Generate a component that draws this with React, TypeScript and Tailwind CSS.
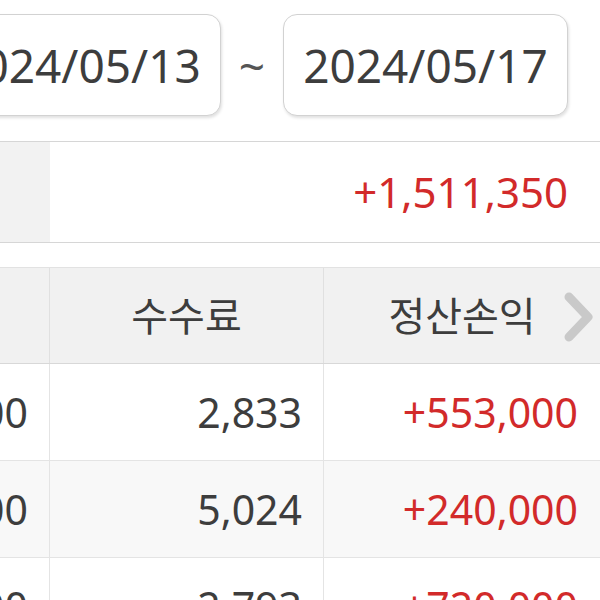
import React from "react";

const font = { fontFamily: '"Noto Sans", "Open Sans", "Noto Sans CJK KR", sans-serif' };

function Chevron() {
  return (
    <svg width="30" height="50" viewBox="0 0 30 50" className="absolute right-[6px] top-[24px]">
      <polyline points="5,5 24,25 5,45" fill="none" stroke="#c9c9c9" strokeWidth="9" strokeLinecap="round" strokeLinejoin="round" />
    </svg>
  );
}

const rows = [
  { a: "1,200,000", b: "2,833", c: "+553,000", bg: "bg-white" },
  { a: "1,800,000", b: "5,024", c: "+240,000", bg: "bg-[#f8f8f8]" },
  { a: "1,500,000", b: "2,793", c: "+720,000", bg: "bg-white" },
];

export default function App() {
  return (
    <div className="w-[600px] h-[600px] overflow-hidden bg-white text-[#3d3d3d]" style={font}>
      <div className="w-[696px] ml-[-96px]">
        {/* date range */}
        <div className="flex items-center px-[32px] pt-[14px]">
          <div className="w-[285px] h-[102px] rounded-[14px] border border-[#d2d2d2] shadow-[1px_2px_3px_rgba(0,0,0,0.12)] bg-white flex items-center justify-center text-[46px] leading-none">
            2024/05/13
          </div>
          <div className="w-[62px] flex items-center justify-center text-[46px] leading-none text-[#555]">~</div>
          <div className="w-[285px] h-[102px] rounded-[14px] border border-[#d2d2d2] shadow-[1px_2px_3px_rgba(0,0,0,0.12)] bg-white flex items-center justify-center text-[46px] leading-none">
            2024/05/17
          </div>
        </div>

        {/* summary */}
        <div className="mt-[25px] flex h-[102px] border-t border-b border-[#d6d6d6]">
          <div className="w-[146px] bg-[#f2f2f2] flex items-center justify-end pr-[43px] text-[38px] leading-none text-[#aaa]">
            총손익
          </div>
          <div className="flex-1 flex items-center justify-end pr-[32px] text-[42px] leading-none text-[#d22a2a]">
            +1,511,350
          </div>
        </div>

        {/* table */}
        <div className="mt-[24px] border-t border-[#e2e2e2]">
          <div className="grid grid-cols-[146px_274px_276px] h-[96px] bg-[#f1f1f1] border-b border-[#d8d8d8]">
            <div className="border-r border-[#e0e0e0]" />
            <div className="border-r border-[#e0e0e0] flex items-center justify-center text-[40px] leading-none">수수료</div>
            <div className="relative flex items-center justify-center text-[40px] leading-none">
              정산손익
              <Chevron />
            </div>
          </div>
          {rows.map((r, i) => (
            <div key={i} className={`grid grid-cols-[146px_274px_276px] h-[97px] border-b border-[#e4e4e4] ${r.bg}`}>
              <div className="border-r border-[#e4e4e4] flex items-center justify-end pr-[21px] text-[41px] leading-none">{r.a}</div>
              <div className="border-r border-[#e4e4e4] flex items-center justify-end pr-[21px] text-[41px] leading-none">{r.b}</div>
              <div className="flex items-center justify-end pr-[22px] text-[41px] leading-none text-[#d22a2a]">{r.c}</div>
            </div>
          ))}
        </div>
      </div>
    </div>
  );
}
